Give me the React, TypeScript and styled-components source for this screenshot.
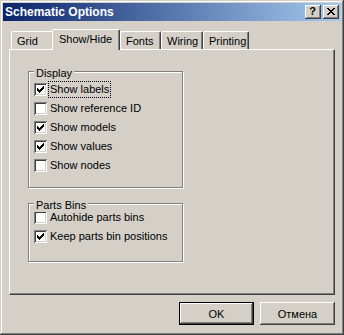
import React from "react";
import styled, { createGlobalStyle } from "styled-components";

const Global = createGlobalStyle`
  html, body { margin: 0; padding: 0; background: #d4d0c8; }
  * { box-sizing: border-box; }
`;

const FONT = `"Liberation Sans", Arial, sans-serif`;

const Window = styled.div`
  width: 344px;
  height: 335px;
  background: #d4d0c8;
  padding: 3px;
  box-shadow: inset -1px -1px #404040, inset 1px 1px #d4d0c8,
    inset -2px -2px #808080, inset 2px 2px #ffffff;
  display: flex;
  flex-direction: column;
  font-family: ${FONT};
  font-size: 11px;
  color: #000;
`;

const TitleBar = styled.div`
  height: 18px;
  background: linear-gradient(to right, #0a246a, #a6caf0);
  display: flex;
  align-items: center;
  padding: 0 2px 0 2px;
`;

const TitleText = styled.div`
  flex: 1;
  color: #fff;
  font-weight: bold;
  font-size: 12px;
  line-height: 14px;
  white-space: nowrap;
`;

const TitleButton = styled.div<{ $gap?: number }>`
  width: 16px;
  height: 14px;
  margin-left: ${(p) => p.$gap ?? 0}px;
  background: #d4d0c8;
  box-shadow: inset -1px -1px #404040, inset 1px 1px #ffffff,
    inset -2px -2px #808080;
  display: flex;
  align-items: center;
  justify-content: center;
  font-weight: bold;
  font-size: 11px;
  line-height: 11px;
  color: #000;
  padding: 0 1px 1px 0;
`;

const Body = styled.div`
  padding: 8px 6px 0 6px;
  display: flex;
  flex-direction: column;
`;

const TabStrip = styled.div`
  height: 20px;
  display: flex;
  align-items: flex-end;
  padding-left: 2px;
`;

const Tab = styled.div<{ $active?: boolean; $w: number }>`
  position: relative;
  z-index: ${(p) => (p.$active ? 2 : 1)};
  width: ${(p) => p.$w}px;
  height: ${(p) => (p.$active ? 21 : 18)}px;
  margin-left: ${(p) => (p.$active ? -2 : 0)}px;
  margin-bottom: ${(p) => (p.$active ? -1 : 0)}px;
  background: #d4d0c8;
  border-top: 1px solid #ffffff;
  border-left: 1px solid #ffffff;
  border-right: 1px solid #404040;
  border-radius: 2px 2px 0 0;
  box-shadow: inset -1px 0 #808080;
  padding: 3px 0 0 ${(p) => (p.$active ? 6 : 5)}px;
  line-height: 13px;
  white-space: nowrap;
`;

const Panel = styled.div`
  height: 246px;
  border: 1px solid;
  border-color: #ffffff #404040 #404040 #ffffff;
  box-shadow: inset -1px -1px #808080;
  padding: 21px 0 0 18px;
  display: flex;
  flex-direction: column;
  align-items: flex-start;
`;

const GroupBox = styled.div<{ $h: number; $pt: number; $mt?: number }>`
  position: relative;
  width: 155px;
  height: ${(p) => p.$h}px;
  margin-top: ${(p) => p.$mt ?? 0}px;
  border: 1px solid #808080;
  box-shadow: inset 1px 1px #ffffff, 1px 1px #ffffff;
  padding: ${(p) => p.$pt}px 0 0 5px;
  display: flex;
  flex-direction: column;
`;

const Legend = styled.span`
  position: absolute;
  top: -5px;
  left: 5px;
  padding: 0 2px;
  background: #d4d0c8;
  line-height: 13px;
  white-space: nowrap;
`;

const CheckRow = styled.div`
  height: 19px;
  display: flex;
  align-items: center;
`;

const CheckBox = styled.div`
  width: 13px;
  height: 13px;
  flex: none;
  background: #ffffff;
  box-shadow: inset 1px 1px #808080, inset -1px -1px #ffffff,
    inset 2px 2px #404040, inset -2px -2px #d4d0c8;
  display: flex;
  align-items: center;
  justify-content: center;
`;

const CheckLabel = styled.span<{ $focus?: boolean }>`
  margin-left: 1px;
  padding: 1px 1px;
  border: 1px dotted ${(p) => (p.$focus ? "#000" : "transparent")};
  line-height: 13px;
  white-space: nowrap;
`;

const Footer = styled.div`
  margin-top: 7px;
  display: flex;
  justify-content: flex-end;
  gap: 6px;
`;

const Button = styled.button<{ $default?: boolean }>`
  width: 75px;
  height: 23px;
  padding: 0;
  margin: 0;
  font-family: ${FONT};
  font-size: 11px;
  color: #000;
  background: #d4d0c8;
  border: ${(p) => (p.$default ? "1px solid #000" : "none")};
  box-shadow: inset -1px -1px #404040, inset 1px 1px #ffffff,
    inset -2px -2px #808080;
`;

const pixelPath = (rows: string[]) => {
  let d = "";
  rows.forEach((r, y) => {
    r.split("").forEach((c, x) => {
      if (c === "X") d += `M${x} ${y}h1v1h-1z`;
    });
  });
  return d;
};

const CHECK = pixelPath([
  "......X",
  ".....XX",
  "X...XXX",
  "XX.XXX.",
  "XXXXX..",
  ".XXX...",
  "..X....",
]);

const CROSS = pixelPath([
  "XX....XX",
  ".XX..XX.",
  "..XXXX..",
  "...XX...",
  "..XXXX..",
  ".XX..XX.",
  "XX....XX",
]);

const CheckMark = () => (
  <svg width="7" height="7" viewBox="0 0 7 7" shapeRendering="crispEdges">
    <path d={CHECK} fill="#000" />
  </svg>
);

const CloseGlyph = () => (
  <svg width="8" height="7" viewBox="0 0 8 7" shapeRendering="crispEdges">
    <path d={CROSS} fill="#000" />
  </svg>
);

type Item = { label: string; checked: boolean; focus?: boolean };

const Check = ({ label, checked, focus }: Item) => (
  <CheckRow>
    <CheckBox>{checked && <CheckMark />}</CheckBox>
    <CheckLabel $focus={focus}>{label}</CheckLabel>
  </CheckRow>
);

const display: Item[] = [
  { label: "Show labels", checked: true, focus: true },
  { label: "Show reference ID", checked: false },
  { label: "Show models", checked: true },
  { label: "Show values", checked: true },
  { label: "Show nodes", checked: false },
];

const bins: Item[] = [
  { label: "Autohide parts bins", checked: false },
  { label: "Keep parts bin positions", checked: true },
];

const tabs = [
  { label: "Grid", w: 43 },
  { label: "Show/Hide", w: 68, active: true },
  { label: "Fonts", w: 41 },
  { label: "Wiring", w: 42 },
  { label: "Printing", w: 46 },
];

export default function App() {
  return (
    <>
      <Global />
      <Window>
        <TitleBar>
          <TitleText>Schematic Options</TitleText>
          <TitleButton>?</TitleButton>
          <TitleButton $gap={2}>
            <CloseGlyph />
          </TitleButton>
        </TitleBar>
        <Body>
          <TabStrip>
            {tabs.map((t) => (
              <Tab key={t.label} $w={t.w} $active={t.active}>
                {t.label}
              </Tab>
            ))}
          </TabStrip>
          <Panel>
            <GroupBox $h={117} $pt={8}>
              <Legend>Display</Legend>
              {display.map((i) => (
                <Check key={i.label} {...i} />
              ))}
            </GroupBox>
            <GroupBox $h={59} $pt={4} $mt={15}>
              <Legend>Parts Bins</Legend>
              {bins.map((i) => (
                <Check key={i.label} {...i} />
              ))}
            </GroupBox>
          </Panel>
          <Footer>
            <Button $default>OK</Button>
            <Button>Отмена</Button>
          </Footer>
        </Body>
      </Window>
    </>
  );
}
